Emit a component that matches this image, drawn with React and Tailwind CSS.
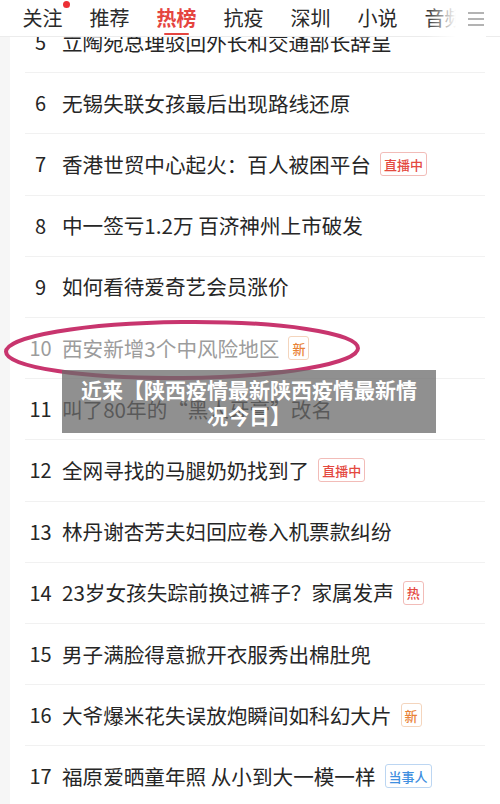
const TABS = ['关注', '推荐', '热榜', '抗疫', '深圳', '小说', '音频'];

const BADGE = {
  live: 'text-[#e4493f] border-[#f2bcb8]',
  new: 'text-[#e98236] border-[#f4d5bd]',
  hot: 'text-[#e4493f] border-[#f2bcb8]',
  who: 'text-[#3f8fe0] border-[#bcd6f2]',
};

const ROWS = [
  { n: 5, t: '立陶宛总理驳回外长和交通部长辞呈' },
  { n: 6, t: '无锡失联女孩最后出现路线还原' },
  { n: 7, t: '香港世贸中心起火：百人被困平台', b: '直播中', k: 'live' },
  { n: 8, t: '中一签亏1.2万 百济神州上市破发' },
  { n: 9, t: '如何看待爱奇艺会员涨价' },
  { n: 10, t: '西安新增3个中风险地区', b: '新', k: 'new', read: true },
  { n: 11, t: '叫了80年的“黑人牙膏”改名' },
  { n: 12, t: '全网寻找的马腿奶奶找到了', b: '直播中', k: 'live' },
  { n: 13, t: '林丹谢杏芳夫妇回应卷入机票款纠纷' },
  { n: 14, t: '23岁女孩失踪前换过裤子？家属发声', b: '热', k: 'hot' },
  { n: 15, t: '男子满脸得意掀开衣服秀出棉肚兜' },
  { n: 16, t: '大爷爆米花失误放炮瞬间如科幻大片', b: '新', k: 'new' },
  { n: 17, t: '福原爱晒童年照 从小到大一模一样', b: '当事人', k: 'who' },
];

function Header() {
  return (
    <div className="relative z-10 h-[37px] bg-white border-b border-[#ececec] flex items-center">
      <div className="flex items-center pl-[22px] gap-[26px] text-[20px] leading-none text-[#2a2a2a]">
        {TABS.map((t) => (
          <div key={t} className="relative w-[41px] h-[37px] flex items-center justify-center shrink-0">
            <span className={t === '热榜' ? 'text-[#e5453f] font-semibold' : ''}>{t}</span>
            {t === '关注' && (
              <span className="absolute right-[-7px] top-[1px] w-[7px] h-[7px] rounded-full bg-[#ec2f35]" />
            )}
            {t === '热榜' && (
              <span className="absolute left-[8px] bottom-[2px] w-[25px] h-[2px] rounded-full bg-[#e5453f]" />
            )}
          </div>
        ))}
      </div>
      <div className="absolute right-[14px] top-0 h-[37px] w-[60px] flex items-center justify-end bg-gradient-to-r from-transparent via-white to-white">
        <svg width="18" height="16" viewBox="0 0 18 16" className="mr-[1px]">
          <path d="M1 2h16M1 8h16M1 14h16" stroke="#9a9a9a" strokeWidth="1.6" />
        </svg>
      </div>
    </div>
  );
}

function Row({ r }) {
  return (
    <div className="h-[61.2px] flex items-center border-b border-[#f1f1f1] ml-[25px] mr-[15px]">
      <span className={`w-[31px] text-center text-[20px] ${r.read ? 'text-[#9c9c9c]' : 'text-[#262626]'}`}>{r.n}</span>
      <span className={`ml-[6px] text-[20.6px] whitespace-nowrap ${r.read ? 'text-[#9c9c9c]' : 'text-[#262626]'}`}>{r.t}</span>
      {r.b && (
        <span className={`ml-[9px] h-[24px] px-[3px] flex items-center border rounded-[3px] text-[13px] font-medium leading-none ${BADGE[r.k]}`}>
          {r.b}
        </span>
      )}
    </div>
  );
}

export default function App() {
  return (
    <div
      className="relative w-[500px] h-[804px] overflow-hidden bg-white"
      style={{ fontFamily: '"Noto Sans CJK SC", "Noto Sans", sans-serif' }}
    >
      <div className="absolute left-0 top-[37px] bottom-0 w-[10px] bg-[#f6f6f6]" />
      <Header />
      <div className="relative -mt-[25px]">
        {ROWS.map((r) => (
          <Row key={r.n} r={r} />
        ))}
      </div>

      {/* hand drawn circle */}
      <svg className="absolute left-0 top-[318px] pointer-events-none" width="380" height="70" viewBox="0 0 380 70">
        <ellipse cx="182" cy="32" rx="176" ry="28" fill="none" stroke="#c8356e" strokeWidth="4" transform="rotate(-0.6 182 32)" />
      </svg>

      {/* caption */}
      <div className="absolute left-[62px] top-[370px] w-[374px] h-[63px] bg-[#6b6b6b]/75 flex flex-col items-center justify-center text-white font-bold text-[21px] leading-[26px]">
        <span>近来【陕西疫情最新陕西疫情最新情</span>
        <span>况今日】</span>
      </div>
    </div>
  );
}
